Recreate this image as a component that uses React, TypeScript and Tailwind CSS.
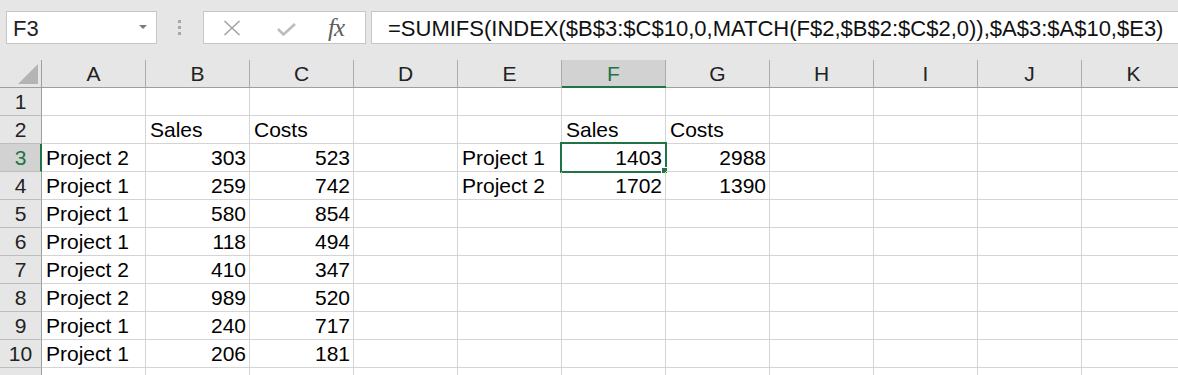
import React from 'react';

const COLS = ['A', 'B', 'C', 'D', 'E', 'F', 'G', 'H', 'I', 'J', 'K'];

type Cell = { v: string; right?: boolean };

const data: Record<number, Record<string, Cell>> = {
  2: { B: { v: 'Sales' }, C: { v: 'Costs' }, F: { v: 'Sales' }, G: { v: 'Costs' } },
  3: { A: { v: 'Project 2' }, B: { v: '303', right: true }, C: { v: '523', right: true }, E: { v: 'Project 1' }, F: { v: '1403', right: true }, G: { v: '2988', right: true } },
  4: { A: { v: 'Project 1' }, B: { v: '259', right: true }, C: { v: '742', right: true }, E: { v: 'Project 2' }, F: { v: '1702', right: true }, G: { v: '1390', right: true } },
  5: { A: { v: 'Project 1' }, B: { v: '580', right: true }, C: { v: '854', right: true } },
  6: { A: { v: 'Project 1' }, B: { v: '118', right: true }, C: { v: '494', right: true } },
  7: { A: { v: 'Project 2' }, B: { v: '410', right: true }, C: { v: '347', right: true } },
  8: { A: { v: 'Project 2' }, B: { v: '989', right: true }, C: { v: '520', right: true } },
  9: { A: { v: 'Project 1' }, B: { v: '240', right: true }, C: { v: '717', right: true } },
  10: { A: { v: 'Project 1' }, B: { v: '206', right: true }, C: { v: '181', right: true } },
};

const ROWS = [1, 2, 3, 4, 5, 6, 7, 8, 9, 10, 11];

const Toolbar: React.FC = () => (
  <div className="flex h-[60px] items-start bg-[#e6e6e6] pl-[6px] pt-[11px]">
    <div className="flex h-[33px] w-[151px] shrink-0 items-center justify-between border border-[#c6c6c6] bg-white pl-[6px] pr-[9px]">
      <span className="pt-[3px] text-[22px] leading-none text-[#222]">F3</span>
      <svg width="8" height="5" viewBox="0 0 8 5">
        <polygon points="0,0 8,0 4,4" fill="#7a7a7a" />
      </svg>
    </div>
    <div className="ml-[21px] flex h-[33px] w-[3px] shrink-0 flex-col justify-center gap-[3px]">
      <div className="h-[3px] w-[3px] bg-[#a8a8a8]" />
      <div className="h-[3px] w-[3px] bg-[#a8a8a8]" />
      <div className="h-[3px] w-[3px] bg-[#a8a8a8]" />
    </div>
    <div className="ml-[22px] flex h-[33px] w-[163px] shrink-0 items-center border border-[#c6c6c6] bg-white">
      <svg className="ml-[19px]" width="18" height="16" viewBox="0 0 18 16">
        <path d="M1.5 1 L16.5 15 M16.5 1 L1.5 15" stroke="#a3a3a3" strokeWidth="1.6" fill="none" />
      </svg>
      <svg className="ml-[36px] mt-[3px]" width="19" height="13" viewBox="0 0 19 13">
        <path d="M1 6 L6.5 11.5 L18 1" stroke="#bdbdbd" strokeWidth="2.6" fill="none" />
      </svg>
      <span className="ml-[32px] font-['Liberation_Serif',serif] text-[25px] italic leading-none tracking-[-1px] text-[#5e5e5e]">
        fx
      </span>
    </div>
    <div className="ml-[5px] flex h-[33px] flex-1 items-center border border-r-0 border-[#c6c6c6] bg-white pl-[16px]">
      <span className="whitespace-nowrap pt-[3px] text-[22px] leading-none text-[#111]">
        =SUMIFS(INDEX($B$3:$C$10,0,MATCH(F$2,$B$2:$C$2,0)),$A$3:$A$10,$E3)
      </span>
    </div>
  </div>
);

const HeaderRow: React.FC = () => (
  <div className="flex h-[28px] bg-[#e6e6e6]">
    <div className="relative h-[28px] w-[42px] shrink-0 border-b border-r border-[#9e9e9e]">
      <svg className="absolute left-0 top-0" width="41" height="27" viewBox="0 0 41 27">
        <polygon points="38,4 38,24 18,24" fill="#b4b4b4" />
      </svg>
    </div>
    {COLS.map((c) =>
      c === 'F' ? (
        <div
          key={c}
          className="flex h-[28px] w-[104px] shrink-0 justify-center border-r border-[#ababab] bg-[#d2d2d2] pt-[2px] text-[21px] leading-[24px] text-[#217346]"
        >
          <div className="absolute mt-[24px] h-[2px] w-[104px] bg-[#217346]" />
          {c}
        </div>
      ) : (
        <div
          key={c}
          className="flex h-[28px] w-[104px] shrink-0 justify-center border-b border-r border-b-[#9e9e9e] border-r-[#ababab] pt-[2px] text-[21px] leading-[24px] text-[#222]"
        >
          {c}
        </div>
      )
    )}
  </div>
);

const Row: React.FC<{ n: number }> = ({ n }) => {
  const active = n === 3;
  return (
    <div className="flex h-[28px]">
      <div
        className={
          active
            ? 'flex h-[28px] w-[42px] shrink-0 justify-center border-b border-r-2 border-b-[#bdbdbd] border-r-[#217346] bg-[#d2d2d2] pl-[1px] pt-[2px] text-[21px] leading-[24px] text-[#217346]'
            : 'flex h-[28px] w-[42px] shrink-0 justify-center border-b border-r border-b-[#bdbdbd] border-r-[#9e9e9e] bg-[#e6e6e6] pt-[2px] text-[21px] leading-[24px] text-[#222]'
        }
      >
        {n}
      </div>
      {COLS.map((c) => {
        const cell = data[n]?.[c];
        const sel = n === 3 && c === 'F';
        return (
          <div
            key={c}
            className={`relative flex h-[28px] w-[104px] shrink-0 items-start border-b border-r border-[#d4d4d4] pt-[2px] text-[21px] leading-[23px] text-black ${
              cell?.right ? 'justify-end pr-[3px]' : 'justify-start pl-[4px]'
            }`}
          >
            {cell?.v}
            {sel && (
              <>
                <div className="absolute -bottom-[2px] -left-[2px] -right-[2px] -top-[2px] border-2 border-[#217346]" />
                <div className="absolute -bottom-[3px] -right-[3px] h-[7px] w-[7px] border border-white bg-[#217346]" />
              </>
            )}
          </div>
        );
      })}
    </div>
  );
};

const App: React.FC = () => {
  return (
    <div className="h-[375px] w-[1178px] overflow-hidden bg-white font-['Liberation_Sans',Arial,sans-serif]">
      <Toolbar />
      <HeaderRow />
      {ROWS.map((n) => (
        <Row key={n} n={n} />
      ))}
    </div>
  );
};

export default App;
